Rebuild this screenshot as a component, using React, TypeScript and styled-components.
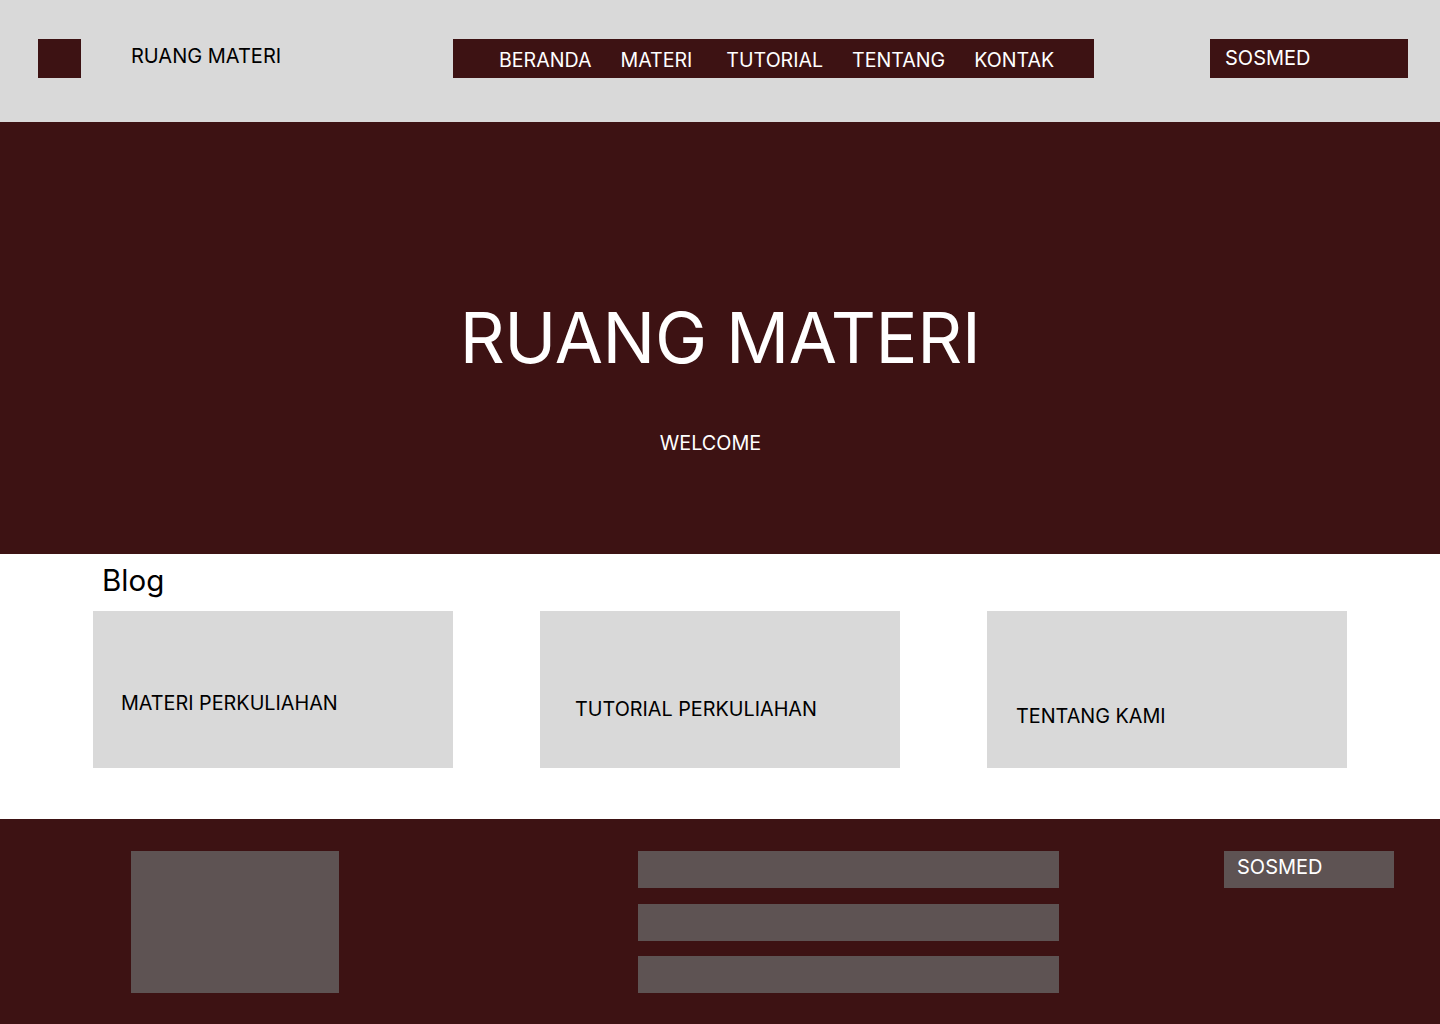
import styled, { createGlobalStyle } from 'styled-components';

const GlobalStyle = createGlobalStyle`
  html, body {
    margin: 0;
    padding: 0;
    background: #ffffff;
  }
  body {
    font-family: Inter, "Noto Sans", Arial, sans-serif;
  }
  * {
    box-sizing: border-box;
  }
`;

const MAROON = '#3d1213';
const GREY = '#d9d9d9';
const MUTED = '#5e5353';

const Page = styled.div`
  width: 1440px;
  min-height: 1024px;
  display: flex;
  flex-direction: column;
`;

const Header = styled.header`
  height: 122px;
  background: ${GREY};
  display: flex;
  align-items: flex-start;
  padding: 39px 0 0 38px;
`;

const LogoBox = styled.div`
  width: 43px;
  height: 39px;
  background: ${MAROON};
  flex: 0 0 auto;
  margin-right: 50px;
`;

const SiteTitle = styled.div`
  flex: 0 0 322px;
  margin-top: 5px;
  font-size: 20px;
  color: #000;
`;

const Nav = styled.nav`
  flex: 0 0 641px;
  height: 39px;
  background: ${MAROON};
  display: flex;
  align-items: flex-start;
  gap: 29px;
  padding: 9px 0 0 46px;
`;

const NavLink = styled.a<{ $shift?: number }>`
  color: #fff;
  font-size: 19.6px;
  text-decoration: none;
  margin-left: ${(p) => p.$shift ?? 0}px;
`;

const SosmedButton = styled.div<{ $bg: string; $w: number; $h: number; $padTop: number; $padLeft: number }>`
  flex: 0 0 ${(p) => p.$w}px;
  height: ${(p) => p.$h}px;
  background: ${(p) => p.$bg};
  color: #fff;
  font-size: 20px;
  padding: ${(p) => p.$padTop}px 0 0 ${(p) => p.$padLeft}px;
`;

const HeaderSosmed = styled(SosmedButton)`
  margin-left: 116px;
`;

const Hero = styled.section`
  height: 432px;
  background: ${MAROON};
  display: flex;
  flex-direction: column;
  align-items: center;
  padding-top: 173px;
`;

const HeroTitle = styled.h1`
  margin: 0;
  font-size: 70px;
  font-weight: 400;
  color: #fff;
  letter-spacing: -0.4px;
`;

const HeroSub = styled.p`
  margin: 51px 19px 0 0;
  font-size: 19.8px;
  color: #fff;
`;

const BlogSection = styled.section`
  height: 265px;
  background: #fff;
  padding: 8px 0 0 93px;
`;

const BlogTitle = styled.h2`
  margin: 0 0 13px 9px;
  font-size: 29.5px;
  font-weight: 400;
  color: #000;
`;

const CardRow = styled.div`
  display: flex;
  gap: 87px;
`;

const Card = styled.div<{ $padTop: number; $padLeft: number }>`
  width: 360px;
  height: 157px;
  background: ${GREY};
  padding: ${(p) => p.$padTop}px 0 0 ${(p) => p.$padLeft}px;
  font-size: 19.8px;
  color: #000;
`;

const Footer = styled.footer`
  flex: 1;
  height: 205px;
  background: ${MAROON};
  display: flex;
  align-items: flex-start;
  padding: 32px 0 0 131px;
`;

const FooterLogo = styled.div`
  width: 208px;
  height: 142px;
  background: ${MUTED};
`;

const LinkColumn = styled.div`
  margin-left: 299px;
  width: 421px;
  display: flex;
  flex-direction: column;
  gap: 15.5px;
`;

const LinkBar = styled.div`
  height: 37px;
  background: ${MUTED};
`;

const FooterSosmed = styled(SosmedButton)`
  margin-left: 165px;
`;

const navItems = [
  { label: 'BERANDA' },
  { label: 'MATERI' },
  { label: 'TUTORIAL', shift: 5 },
  { label: 'TENTANG' },
  { label: 'KONTAK' },
];

const cards = [
  { label: 'MATERI PERKULIAHAN', top: 80, left: 28 },
  { label: 'TUTORIAL PERKULIAHAN', top: 86, left: 35 },
  { label: 'TENTANG KAMI', top: 93, left: 29 },
];

export default function App() {
  return (
    <Page>
      <GlobalStyle />
      <Header>
        <LogoBox />
        <SiteTitle>RUANG MATERI</SiteTitle>
        <Nav>
          {navItems.map((item) => (
            <NavLink key={item.label} href="#" $shift={item.shift}>
              {item.label}
            </NavLink>
          ))}
        </Nav>
        <HeaderSosmed $bg={MAROON} $w={198} $h={39} $padTop={7} $padLeft={15}>
          SOSMED
        </HeaderSosmed>
      </Header>

      <Hero>
        <HeroTitle>RUANG MATERI</HeroTitle>
        <HeroSub>WELCOME</HeroSub>
      </Hero>

      <BlogSection>
        <BlogTitle>Blog</BlogTitle>
        <CardRow>
          {cards.map((c) => (
            <Card key={c.label} $padTop={c.top} $padLeft={c.left}>
              {c.label}
            </Card>
          ))}
        </CardRow>
      </BlogSection>

      <Footer>
        <FooterLogo />
        <LinkColumn>
          <LinkBar />
          <LinkBar />
          <LinkBar />
        </LinkColumn>
        <FooterSosmed $bg={MUTED} $w={170} $h={37} $padTop={4} $padLeft={13}>
          SOSMED
        </FooterSosmed>
      </Footer>
    </Page>
  );
}
